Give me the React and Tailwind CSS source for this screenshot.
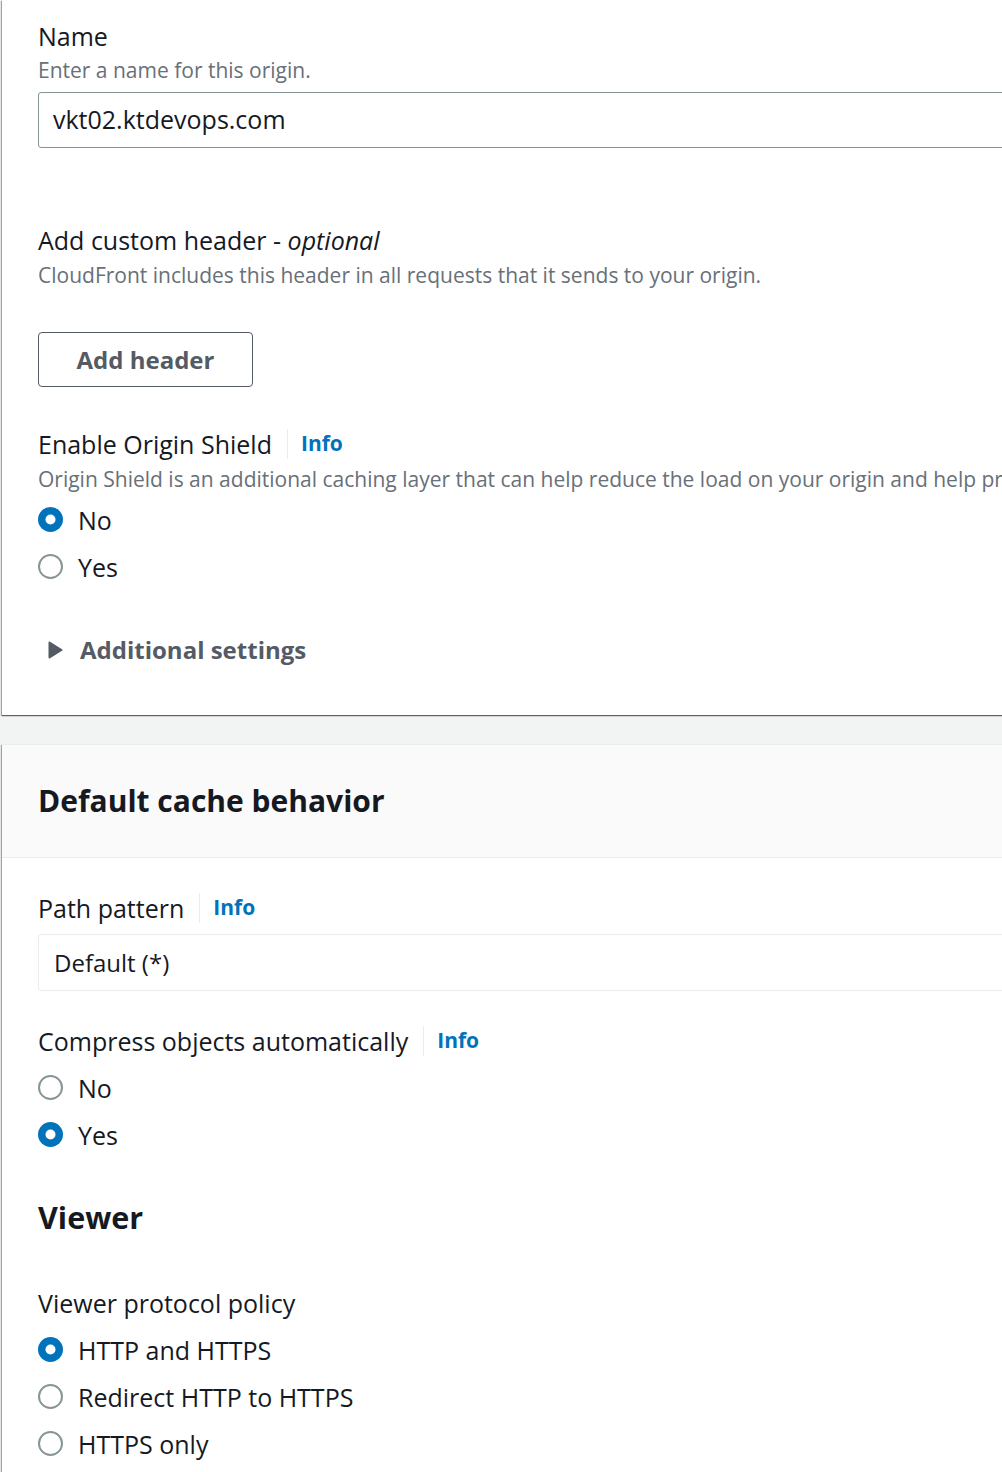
import React from "react";

const font = { fontFamily: "'Open Sans', 'Noto Sans', sans-serif" };

function Radio({ checked, label }) {
  return (
    <div className="flex h-[47px] items-center gap-[15px]">
      <svg width="25" height="25" viewBox="0 0 25 25" className="shrink-0">
        {checked ? (
          <>
            <circle cx="12.5" cy="12.5" r="12.5" fill="#0073bb" />
            <circle cx="12.5" cy="12.5" r="5" fill="#ffffff" />
          </>
        ) : (
          <circle cx="12.5" cy="12.5" r="11.5" fill="#ffffff" stroke="#879596" strokeWidth="2" />
        )}
      </svg>
      <span className="text-[25px] leading-[34px] text-[#16191f]">{label}</span>
    </div>
  );
}

function LabelInfo({ children }) {
  return (
    <div className="flex items-center h-[34px]">
      <span className="text-[25px] leading-[34px] text-[#16191f]">{children}</span>
      <span className="ml-[15px] mr-[13px] w-px h-[30px] bg-[#eaeded]" />
      <span className="text-[21px] font-bold text-[#0073bb]">Info</span>
    </div>
  );
}

export default function App() {
  return (
    <div className="w-[1002px] min-h-[1472px] overflow-hidden bg-[#f2f3f3]" style={font}>
      <div className="w-[1200px] ml-[2px] bg-white shadow-[0_1px_1px_0_rgba(0,28,36,0.5),-1px_1px_1px_0_rgba(0,28,36,0.3)] pl-[36px] pt-[19px] pb-[48px]">
        <div className="text-[25px] leading-[34px] text-[#16191f]">Name</div>
        <div className="mt-[2px] text-[21px] leading-[30px] text-[#687078]">Enter a name for this origin.</div>
        <div className="mt-[7px] h-[56px] border border-[#879596] rounded-[3px] flex items-center pl-[14px] text-[25px] text-[#16191f]">
          vkt02.ktdevops.com
        </div>

        <div className="mt-[75px] text-[25px] leading-[34px] text-[#16191f]">
          Add custom header - <i>optional</i>
        </div>
        <div className="mt-[3px] text-[21px] leading-[30px] text-[#687078]">
          CloudFront includes this header in all requests that it sends to your origin.
        </div>
        <button className="mt-[42px] w-[215px] h-[55px] border-[1.5px] border-[#545b64] rounded-[4px] text-[24px] font-bold text-[#545b64] bg-white">
          Add header
        </button>

        <div className="mt-[40px]">
          <LabelInfo>Enable Origin Shield</LabelInfo>
        </div>
        <div className="mt-[3px] text-[21px] leading-[30px] text-[#687078] whitespace-nowrap">
          Origin Shield is an additional caching layer that can help reduce the load on your origin and help protect its availability.
        </div>
        <div className="mt-[2px]">
          <Radio checked label="No" />
          <Radio label="Yes" />
        </div>

        <div className="mt-[43px] flex items-center h-[34px] pl-[10px] gap-[17px]">
          <svg width="15" height="18" viewBox="0 0 15 18">
            <path d="M1.5 1.5 L13.5 9 L1.5 16.5 Z" fill="#545b64" stroke="#545b64" strokeWidth="2" strokeLinejoin="round" />
          </svg>
          <span className="text-[24px] font-bold text-[#545b64]">Additional settings</span>
        </div>
      </div>

      <div className="mt-[29px] w-[1200px] ml-[2px] bg-white shadow-[0_1px_1px_0_rgba(0,28,36,0.5),-1px_1px_1px_0_rgba(0,28,36,0.3)] border-t border-[#eaeded]">
        <div className="bg-[#fafafa] border-b border-[#eaeded] pl-[36px] pt-[36px] pb-[36px]">
          <div className="text-[30px] leading-[40px] font-bold text-[#16191f]">Default cache behavior</div>
        </div>
        <div className="pl-[36px] pb-[20px]">
          <div className="mt-[33px]">
            <LabelInfo>Path pattern</LabelInfo>
          </div>
          <div className="mt-[9px] h-[57px] border border-[#eaeded] rounded-[3px] flex items-center pl-[15px] text-[24px] text-[#16191f]">
            Default (*)
          </div>

          <div className="mt-[33px]">
            <LabelInfo>Compress objects automatically</LabelInfo>
          </div>
          <div className="mt-[6px]">
            <Radio label="No" />
            <Radio checked label="Yes" />
          </div>

          <div className="mt-[39px] text-[30.5px] leading-[40px] font-bold text-[#16191f]">Viewer</div>

          <div className="mt-[49px] text-[25px] leading-[34px] text-[#16191f]">Viewer protocol policy</div>
          <div className="mt-[6px]">
            <Radio checked label="HTTP and HTTPS" />
            <Radio label="Redirect HTTP to HTTPS" />
            <Radio label="HTTPS only" />
          </div>
        </div>
      </div>
    </div>
  );
}
